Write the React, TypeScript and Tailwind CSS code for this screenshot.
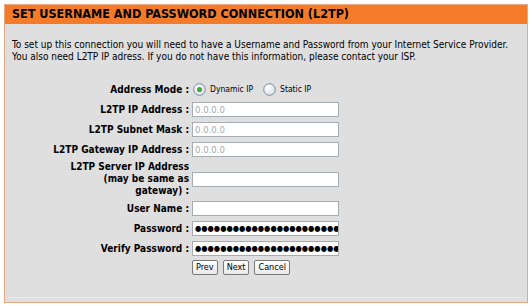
const font = "font-['Tahoma','DejaVu_Sans_Condensed','DejaVu_Sans',sans-serif]";

function Radio({ checked }: { checked?: boolean }) {
  const id = checked ? "rg1" : "rg2";
  return (
    <svg width="13" height="13" viewBox="0 0 13 13" className="shrink-0">
      <defs>
        <radialGradient id={id} cx="0.35" cy="0.35" r="0.8">
          <stop offset="0" stopColor="#ffffff" />
          <stop offset="1" stopColor="#d6dbe2" />
        </radialGradient>
      </defs>
      <circle cx="6.5" cy="6.5" r="5.8" fill={`url(#${id})`} stroke="#7b8a9c" strokeWidth="1" />
      {checked && <circle cx="6.5" cy="6.5" r="2.6" fill="#3fae3a" />}
    </svg>
  );
}

function Field({ value, dim, password }: { value?: string; dim?: boolean; password?: boolean }) {
  return (
    <div className="w-[147px] h-[15px] bg-white border border-[#a5acb2] flex items-center px-[2px] overflow-hidden">
      {password ? (
        <span className="text-[8px] leading-none text-black whitespace-nowrap">{"●".repeat(28)}</span>
      ) : (
        <span className={`text-[9.5px] leading-none ${dim ? "text-[#a8a8a8]" : "text-black"}`}>{value}</span>
      )}
    </div>
  );
}

function Row({ label, children }: { label: React.ReactNode; children: React.ReactNode }) {
  return (
    <div className="flex items-center">
      <div className="w-[184px] text-right font-bold text-[10px] leading-[12px] text-black">{label}</div>
      <div className="ml-[3px]">{children}</div>
    </div>
  );
}

function Btn({ children }: { children: React.ReactNode }) {
  return (
    <button className="h-[15px] px-[3px] border border-[#7a7a7a] rounded-[2px] bg-gradient-to-b from-white to-[#e9e9e9] text-[9px] leading-none text-black">
      {children}
    </button>
  );
}

export default function App() {
  return (
    <div className={`w-[532px] h-[306px] bg-white pt-[4px] pl-[4px] ${font}`}>
      <div className="w-[524px] h-[299px] border border-[#e8a882] bg-[#dfdfdf] flex flex-col">
        <div className="h-[19px] bg-[#f37b2a] flex items-center px-[7px]">
          <span className="font-bold text-[12.5px] text-black">
            SET USERNAME AND PASSWORD CONNECTION (L2TP)
          </span>
        </div>

        <div className="flex-1 flex flex-col">
          <p className="mt-[15px] px-[7px] text-[10px] leading-[12px] text-black whitespace-nowrap">
            To set up this connection you will need to have a Username and Password from your Internet Service Provider.
            <br />
            You also need L2TP IP adress. If you do not have this information, please contact your ISP.
          </p>

          <div className="mt-[19px] flex flex-col gap-[5px]">
            <Row label="Address Mode :">
              <div className="flex items-center h-[15px] pl-[1px] text-[8.5px] text-black">
                <Radio checked />
                <span className="ml-[4px]">Dynamic IP</span>
                <span className="ml-[10px]">
                  <Radio />
                </span>
                <span className="ml-[4px]">Static IP</span>
              </div>
            </Row>
            <Row label="L2TP IP Address :">
              <Field value="0.0.0.0" dim />
            </Row>
            <Row label="L2TP Subnet Mask :">
              <Field value="0.0.0.0" dim />
            </Row>
            <Row label="L2TP Gateway IP Address :">
              <Field value="0.0.0.0" dim />
            </Row>
            <div className="-my-[1px]">
              <Row
                label={
                  <>
                    L2TP Server IP Address
                    <br />
                    (may be same as
                    <br />
                    gateway) :
                  </>
                }
              >
                <Field />
              </Row>
            </div>
            <Row label="User Name :">
              <Field />
            </Row>
            <Row label="Password :">
              <Field password />
            </Row>
            <Row label="Verify Password :">
              <Field password />
            </Row>
            <div className="flex pl-[187px] gap-[5px] -mt-[1px]">
              <Btn>Prev</Btn>
              <Btn>Next</Btn>
              <Btn>Cancel</Btn>
            </div>
          </div>
        </div>
        <div className="mx-[4px] mb-[4px] h-[1px] bg-[#e6ecf2]" />
      </div>
    </div>
  );
}
